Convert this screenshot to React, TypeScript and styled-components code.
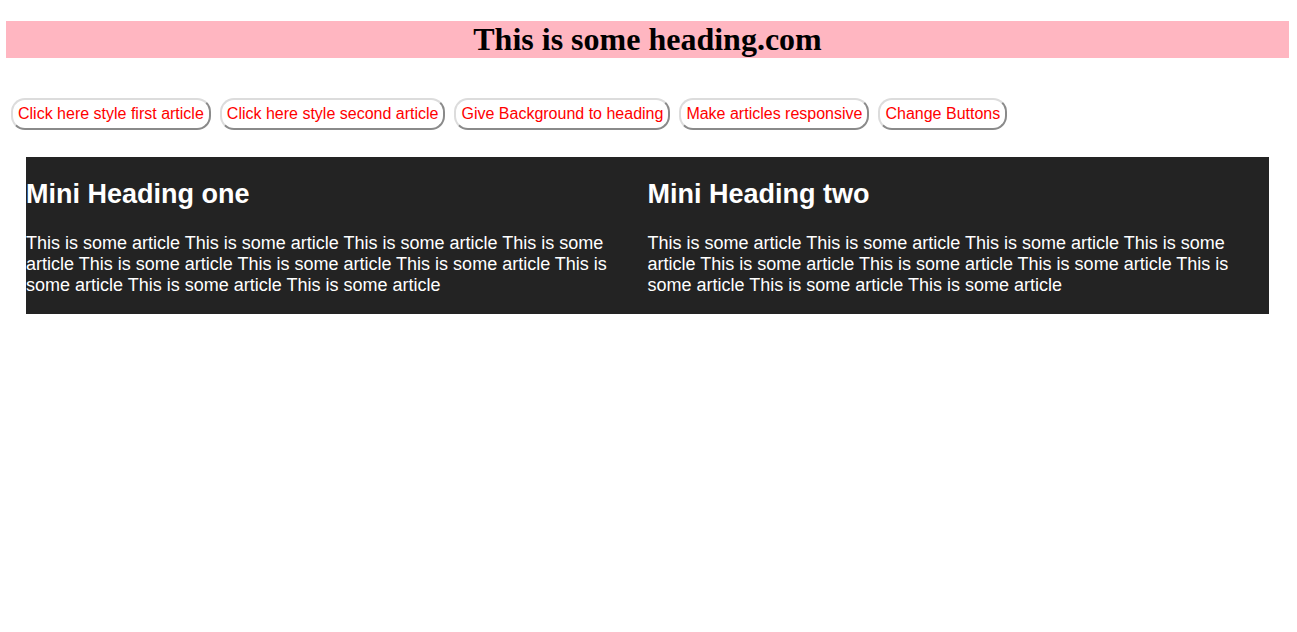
import React from "react";
import styled, { createGlobalStyle } from "styled-components";

const GlobalStyle = createGlobalStyle`
  html, body { margin: 0; padding: 0; background: #ffffff; }
  body { font-family: "Liberation Sans", Arial, sans-serif; font-size: 18px; }
`;

const Page = styled.div`
  padding: 21px 8px 0 6px;
`;

const Heading = styled.h1`
  margin: 0;
  background: #ffb6c1;
  text-align: center;
  font-family: "Liberation Serif", "Times New Roman", serif;
  font-weight: bold;
  font-size: 32px;
  line-height: 37px;
  color: #000;
`;

const Toolbar = styled.nav`
  display: flex;
  flex-wrap: wrap;
  gap: 9px;
  margin: 40px 0 0 5px;
`;

const Button = styled.button`
  font-family: "Liberation Sans", Arial, sans-serif;
  font-size: 16px;
  line-height: 18px;
  color: #ff0000;
  background: #ffffff;
  padding: 5px 5px;
  border: 2px solid;
  border-color: #dcdcdc #8a8a8a #8a8a8a #dcdcdc;
  border-radius: 14px;
  cursor: pointer;
`;

const Articles = styled.section`
  display: grid;
  grid-template-columns: 1fr 1fr;
  margin: 27px 20px 0 20px;
  background: #232323;
  color: #ffffff;
`;

const Article = styled.article`
  display: flex;
  flex-direction: column;
`;

const MiniHeading = styled.h2`
  margin: 22px 0 23px;
  font-size: 27px;
  line-height: 31px;
  font-weight: bold;
`;

const Text = styled.p`
  margin: 0 0 18px;
  font-size: 18px;
  line-height: 21px;
  padding-right: 8px;
`;

const body =
  "This is some article This is some article This is some article This is some article This is some article This is some article This is some article This is some article This is some article This is some article";

const buttons = [
  "Click here style first article",
  "Click here style second article",
  "Give Background to heading",
  "Make articles responsive",
  "Change Buttons",
];

export default function App() {
  return (
    <>
      <GlobalStyle />
      <Page>
        <Heading>This is some heading.com</Heading>
        <Toolbar>
          {buttons.map((b) => (
            <Button key={b}>{b}</Button>
          ))}
        </Toolbar>
        <Articles>
          <Article>
            <MiniHeading>Mini Heading one</MiniHeading>
            <Text>{body}</Text>
          </Article>
          <Article>
            <MiniHeading>Mini Heading two</MiniHeading>
            <Text>{body}</Text>
          </Article>
        </Articles>
      </Page>
    </>
  );
}
